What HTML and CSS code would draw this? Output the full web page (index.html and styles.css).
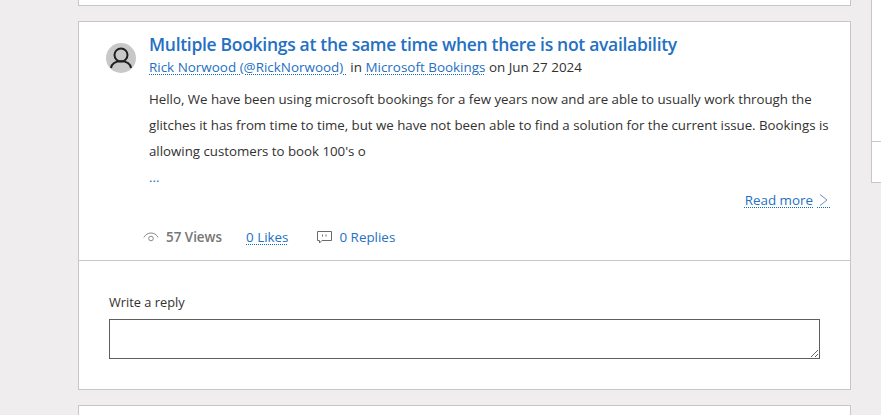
FILE: index.html
```html
<!DOCTYPE html>
<html lang="en">
<head>
<meta charset="utf-8">
<title>Multiple Bookings</title>
<link rel="stylesheet" href="styles.css">
</head>
<body>
<div class="layout">
  <main class="feed">
    <div class="card card-prev"></div>
    <article class="card post">
      <div class="post-body">
        <header class="post-head">
          <div class="avatar">
            <svg viewBox="0 0 30 30" width="30" height="30" fill="none" stroke="#1f1f1f" stroke-width="2">
              <circle cx="15" cy="12" r="6.5"/>
              <path d="M5 25c.8-4.400 4.600-6.800 10-6.800s9.200 2.400 10 6.800"/>
            </svg>
          </div>
          <div class="head-text">
            <h2 class="title"><a href="#">Multiple Bookings at the same time when there is not availability</a></h2>
            <p class="meta"><a class="dotted" href="#">Rick Norwood (@RickNorwood)&nbsp;</a> in <a class="dotted" href="#">Microsoft Bookings</a> on Jun 27 2024</p>
          </div>
        </header>
        <div class="excerpt">
          <p>Hello, We have been using microsoft bookings for a few years now and are able to usually work through the glitches it has from time to time, but we have not been able to find a solution for the current issue. Bookings is allowing customers to book 100's o</p>
          <p class="ellipsis">...</p>
        </div>
        <div class="more-row">
          <a class="more" href="#"><span class="dotted">Read more</span><span class="chev-box"><svg viewBox="0 0 9 12" width="9" height="12" fill="none" stroke="#6d8fc0" stroke-width="1"><path d="M1 .5l7 5.500-7 5.500"/></svg></span></a>
        </div>
        <div class="stats">
          <span class="stat views">
            <svg viewBox="0 0 16 12" width="16" height="12" fill="none" stroke="#8a8a8a" stroke-width="1"><path d="M.8 6.500C2.600 3.500 5 2 8 2s5.400 1.500 7.200 4.500"/><circle cx="8" cy="7.500" r="2.300"/></svg>
            <b>57 Views</b>
          </span>
          <a class="dotted stat-link" href="#">0 Likes</a>
          <span class="stat replies">
            <svg viewBox="0 0 15 14" width="15" height="14" fill="none" stroke="#6a6a6a" stroke-width="1"><path d="M.5 1.500h14v9H5L2.500 13v-2.500h-2z"/><path d="M5.500 4.500v2M9 4.500v2"/></svg>
            <a class="plain" href="#">0 Replies</a>
          </span>
        </div>
      </div>
      <form class="reply">
        <label class="reply-label" for="reply-box">Write a reply</label>
        <textarea class="reply-box" id="reply-box"></textarea>
      </form>
    </article>
    <div class="card card-next"></div>
  </main>
  <aside class="side">
    <div class="side-row"></div>
    <div class="side-row"></div>
  </aside>
</div>
</body>
</html>
```
FILE: styles.css
```css
* { box-sizing: border-box; }
html, body { margin: 0; height: 415px; overflow: hidden; }
body {
  background: #efedee;
  font-family: "Open Sans", "Noto Sans", sans-serif;
  color: #323130;
}
a { color: #2470c2; text-decoration: none; }
.layout { display: flex; padding-left: 78px; gap: 20px; }
.feed { width: 773px; flex: none; }
.card { background: #fff; border: 1px solid #c8c6c6; }
.card-prev { height: 6px; border-top: 0; margin-bottom: 15px; }
.card-next { height: 20px; margin-top: 15px; }
.post { height: 369px; }
.post-body { height: 239px; padding: 11px 20px 0 27px; border-bottom: 1px solid #c8c6c6; }
.post-head { display: flex; gap: 13px; }
.avatar {
  width: 30px; height: 30px; border-radius: 50%;
  background: #c8c8c8; margin-top: 10px; flex: none;
}
.avatar svg { display: block; }
.title { margin: 0; font-size: 17.5px; line-height: 22px; font-weight: 600; letter-spacing: -0.3px; }
.meta { margin: 1px 0 0; font-size: 13.45px; line-height: 22px; }
.dotted {
  text-decoration: underline dotted #0f6cbd 1px;
  text-underline-offset: 2px;
}
.excerpt { margin: 8px -7px 0 43px; font-size: 13.3px; line-height: 26px; letter-spacing: -0.02px; }
.excerpt p { margin: 0; }
.ellipsis { color: #2470c2; }
.more-row { display: flex; justify-content: flex-end; margin-top: 1px; font-size: 13.4px; line-height: 19px; }
.more { display: inline-flex; align-items: center; gap: 4px; }
.chev-box { display: flex; justify-content: center; width: 13px; height: 14px; border-bottom: 1px dotted #0f6cbd; margin-top: 1px; }
.chev-box svg { display: block; }
.stats { display: flex; align-items: center; margin: 17px 0 0 37px; font-size: 13.4px; line-height: 20px; }
.stat { display: inline-flex; align-items: center; gap: 7px; }
.views { color: #757575; }
.views b { font-weight: 600; }
.stat-link { margin-left: 24px; }
.replies { margin-left: 29px; gap: 7px; }
.reply { padding: 32px 30px 0; }
.reply-label { display: block; font-size: 12.8px; line-height: 18px; color: #323130; }
.reply-box {
  display: block; width: 711px; height: 40px; margin-top: 8px;
  background: #fff; border: 1px solid #605e5c; border-radius: 0; padding: 0;
}
.side { width: 30px; flex: none; }
.side-row { background: #fff; border: 1px solid #c8c6c6; border-right: 0; height: 142px; border-top: 0; }
.side-row + .side-row { height: 41px; }
```
